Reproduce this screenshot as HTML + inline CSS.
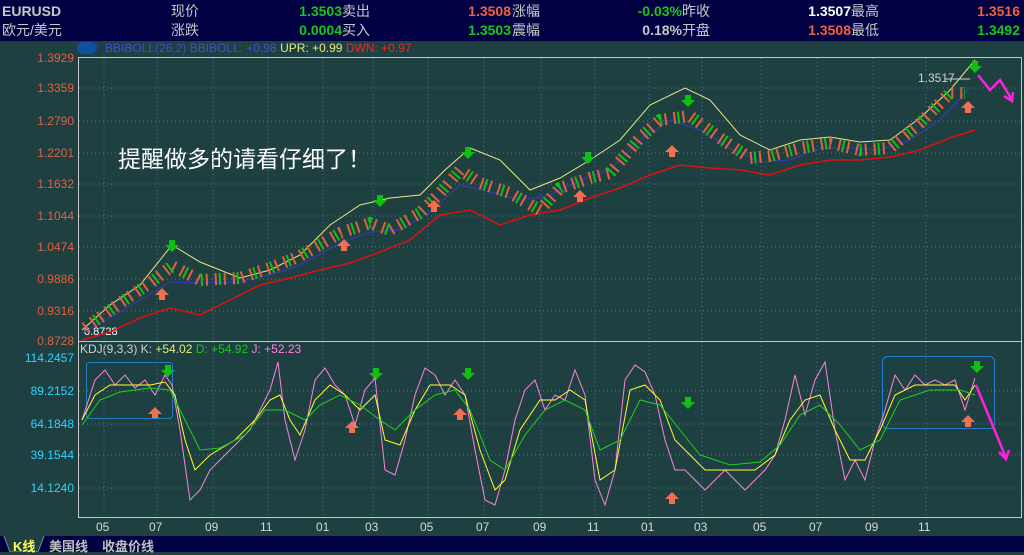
<!DOCTYPE html><html><head><meta charset="utf-8"><style>
*{margin:0;padding:0}body{width:1024px;height:552px;background:#1f4040;position:relative;overflow:hidden;font-family:"Liberation Sans","Noto Sans CJK SC",sans-serif}
.hd{position:absolute;left:0;top:0;width:1024px;height:41px;background:#000042;font-size:14px;color:#c8c8c8}
.hd span{position:absolute;line-height:19px}
.g{color:#18c818;font-weight:bold}.r{color:#f06040;font-weight:bold}.w{color:#fff;font-weight:bold}
.ft{position:absolute;left:0;top:536px;width:1024px;height:16px;background:#000042;font-size:13px;font-weight:bold;color:#c0c0c0}
.ax{position:absolute;font-size:12px;color:#e06040;text-align:right;width:74px;left:0}
.ax2{color:#30d0ff}
.mo{position:absolute;top:520px;font-size:12px;color:#d8d8d8}
</style></head><body>
<div class="hd">
<span style="left:2px;top:2px;font-weight:bold">EURUSD</span><span style="left:2px;top:21px">欧元/美元</span>
<span style="left:171px;top:2px">现价</span><span style="left:171px;top:21px">涨跌</span>
<span class="g" style="right:682px;top:2px">1.3503</span><span class="g" style="right:682px;top:21px">0.0004</span>
<span style="left:342px;top:2px">卖出</span><span style="left:342px;top:21px">买入</span>
<span class="r" style="right:513px;top:2px">1.3508</span><span class="g" style="right:513px;top:21px">1.3503</span>
<span style="left:512px;top:2px">涨幅</span><span style="left:512px;top:21px">震幅</span>
<span class="g" style="right:342px;top:2px">-0.03%</span><span style="right:342px;top:21px;font-weight:bold">0.18%</span>
<span style="left:682px;top:2px">昨收</span><span style="left:682px;top:21px">开盘</span>
<span class="w" style="right:173px;top:2px">1.3507</span><span class="r" style="right:173px;top:21px">1.3508</span>
<span style="left:851px;top:2px">最高</span><span style="left:851px;top:21px">最低</span>
<span class="r" style="right:4px;top:2px">1.3516</span><span class="g" style="right:4px;top:21px">1.3492</span>
</div>
<div style="position:absolute;left:77px;top:42px;width:20px;height:12px;background:#1050a0;border-radius:6px"></div>
<div style="position:absolute;left:105px;top:41px;font-size:12px;color:#4848d8">BBIBOLL(26,2) BBIBOLL: +0.98 <span style="color:#e8e880">UPR: +0.99</span> <span style="color:#ff2020">DWN: +0.97</span></div>
<div class="ax" style="top:51px">1.3929</div><div class="ax" style="top:81px">1.3359</div><div class="ax" style="top:114px">1.2790</div><div class="ax" style="top:146px">1.2201</div><div class="ax" style="top:177px">1.1632</div><div class="ax" style="top:209px">1.1044</div><div class="ax" style="top:240px">1.0474</div><div class="ax" style="top:272px">0.9886</div><div class="ax" style="top:304px">0.9316</div><div class="ax" style="top:334px">0.8728</div>
<div class="ax ax2" style="top:351px">114.2457</div><div class="ax ax2" style="top:384px">89.2152</div><div class="ax ax2" style="top:417px">64.1848</div><div class="ax ax2" style="top:448px">39.1544</div><div class="ax ax2" style="top:481px">14.1240</div>
<div style="position:absolute;left:80px;top:342px;font-size:12px;color:#d0d0d0">KDJ(9,3,3) K: <span style="color:#e8e880">+54.02</span> <span style="color:#18c818">D: +54.92</span> <span style="color:#ff80e0">J: +52.23</span></div>
<div style="position:absolute;left:84px;top:326px;font-size:11px;color:#fff">0.8728</div>
<div style="position:absolute;left:918px;top:71px;font-size:12px;color:#d0d0d0">1.3517</div>
<div style="position:absolute;left:118px;top:140px;font-size:23px;color:#fff">提醒做多的请看仔细了！</div>
<svg style="position:absolute;left:0;top:0" width="1024" height="552">
<g stroke="#5070a0" stroke-dasharray="1 3" stroke-width="1">
<path d="M79 88H1020M79 121H1020M79 153H1020M79 184H1020M79 216H1020M79 247H1020M79 279H1020M79 311H1020M79 391H1020M79 424H1020M79 455H1020M79 488H1020"/>
<path d="M104 58V516M157 58V516M213 58V516M268 58V516M323 58V516M373 58V516M428 58V516M484 58V516M541 58V516M595 58V516M649 58V516M702 58V516M761 58V516M817 58V516M873 58V516M926 58V516"/>
</g>
<rect x="78.5" y="57.5" width="943" height="460" fill="none" stroke="#c8c8c8"/>
<path d="M78 341.5H1022" stroke="#c8c8c8"/>
<polyline fill="none" stroke="#e8e880" points="82,330 110,305 140,285 172,245 200,262 240,278 270,270 300,255 330,225 360,205 390,198 420,195 445,170 470,148 500,160 530,190 560,178 590,160 620,140 650,105 685,88 710,100 740,135 770,150 800,140 830,137 860,142 890,140 920,118 950,90 975,60"/>
<polyline fill="none" stroke="#3838c8" points="82,333 110,318 140,300 170,282 200,283 240,282 270,275 300,265 340,243 370,232 400,230 430,212 460,185 490,192 520,200 550,195 580,180 610,170 640,140 670,120 700,130 730,148 760,162 790,160 820,148 850,148 880,150 910,140 940,120 970,88"/>
<polyline fill="none" stroke="#e01010" stroke-width="1.5" points="82,340 110,332 140,318 170,308 200,315 230,300 260,285 290,278 320,270 350,263 380,252 410,240 440,215 470,210 500,225 530,215 560,210 590,198 620,188 650,175 680,165 710,168 740,170 770,175 800,165 830,160 860,160 890,157 920,150 950,138 975,130"/>
<g fill="none" stroke-width="12">
<polyline stroke="#e06040" stroke-dasharray="2 7" points="85,328 120,303 150,283 172,266 200,280 240,278 270,268 300,256 340,233 370,223 390,230 420,213 440,193 460,170 480,183 510,193 540,210 560,188 590,178 610,173 640,138 660,120 690,116 720,138 750,158 770,156 800,148 830,143 860,150 890,148 920,123 950,93 965,93"/>
<polyline stroke="#10c010" stroke-dasharray="2 16" stroke-dashoffset="5" points="85,328 120,303 150,283 172,266 200,280 240,278 270,268 300,256 340,233 370,223 390,230 420,213 440,193 460,170 480,183 510,193 540,210 560,188 590,178 610,173 640,138 660,120 690,116 720,138 750,158 770,156 800,148 830,143 860,150 890,148 920,123 950,93 965,93"/>
</g>
<path d="M945 79H970" stroke="#d0d0d0"/>
<g fill="#10c010">
<path d="M169 240h6v5h4l-7 7-7-7h4z"/><path d="M377 195h6v5h4l-7 7-7-7h4z"/><path d="M465 147h6v5h4l-7 7-7-7h4z"/><path d="M585 152h6v5h4l-7 7-7-7h4z"/><path d="M685 95h6v5h4l-7 7-7-7h4z"/><path d="M972 61h6v5h4l-7 7-7-7h4z"/>
<path d="M165 365h6v5h4l-7 7-7-7h4z"/><path d="M373 368h6v5h4l-7 7-7-7h4z"/><path d="M465 368h6v5h4l-7 7-7-7h4z"/><path d="M685 397h6v5h4l-7 7-7-7h4z"/><path d="M974 361h6v5h4l-7 7-7-7h4z"/>
</g>
<g fill="#f07050">
<path d="M159 300h6v-5h4l-7-7-7 7h4z"/><path d="M341 251h6v-5h4l-7-7-7 7h4z"/><path d="M431 212h6v-5h4l-7-7-7 7h4z"/><path d="M577 202h6v-5h4l-7-7-7 7h4z"/><path d="M669 157h6v-5h4l-7-7-7 7h4z"/><path d="M965 113h6v-5h4l-7-7-7 7h4z"/>
<path d="M152 419h6v-5h4l-7-7-7 7h4z"/><path d="M349 433h6v-5h4l-7-7-7 7h4z"/><path d="M457 420h6v-5h4l-7-7-7 7h4z"/><path d="M669 504h6v-5h4l-7-7-7 7h4z"/><path d="M965 427h6v-5h4l-7-7-7 7h4z"/>
</g>
<rect x="86.5" y="362.5" width="86" height="56" rx="3" fill="none" stroke="#2080c0"/>
<rect x="882.5" y="356.5" width="112" height="72" rx="5" fill="none" stroke="#2080d0"/>
<polyline fill="none" stroke="#ff80e0" points="82,420 95,380 105,370 115,385 125,375 135,388 145,380 155,395 165,375 172,385 180,430 190,500 200,490 210,470 230,450 250,430 270,390 278,362 285,420 295,460 305,430 315,380 325,368 335,385 345,395 355,425 365,390 375,378 385,470 395,475 405,440 415,395 425,368 435,375 445,395 455,380 465,395 475,450 485,500 495,505 505,470 515,420 525,390 535,380 545,410 555,395 565,400 575,370 585,395 595,480 605,505 615,470 625,380 635,365 645,372 655,395 665,440 675,470 685,470 695,480 705,490 715,480 725,470 735,480 745,490 755,480 765,470 775,455 785,420 795,375 805,415 815,380 825,362 835,430 845,480 855,460 865,480 875,440 885,410 895,375 905,390 915,375 925,385 935,380 945,385 955,380 965,410 975,378"/>
<polyline fill="none" stroke="#ffff30" points="82,420 95,395 110,385 130,385 150,385 165,382 175,395 185,440 195,470 210,455 235,440 255,420 270,400 280,395 290,420 300,435 315,400 330,385 345,395 360,410 375,395 385,440 400,445 415,410 430,385 450,385 465,395 480,450 495,490 505,480 520,430 540,400 555,400 570,390 585,400 600,480 615,470 630,390 645,385 660,400 675,440 690,455 705,470 730,470 755,470 775,455 790,420 805,400 820,395 835,430 850,460 865,460 880,430 895,395 915,385 935,385 955,385 965,400 975,385"/>
<polyline fill="none" stroke="#20d020" points="82,425 100,400 120,392 150,388 170,390 185,420 200,450 220,448 245,435 265,410 285,410 305,420 320,405 340,395 360,405 380,420 395,430 415,410 435,395 455,390 470,410 490,460 505,470 525,435 545,410 565,400 585,410 600,450 620,440 640,400 660,405 680,430 700,455 730,465 760,462 780,445 800,415 820,405 840,425 860,450 880,440 900,400 930,390 960,390 975,395"/>
<g fill="none" stroke="#ff20e0" stroke-width="2.5">
<polyline points="978,75 990,90 1000,80 1012,100"/><path d="M1004 96l8 5 1-9"/>
<polyline points="976,385 1006,458"/><path d="M999 452l7 7 3-9"/>
</g>
</svg>
<div class="mo" style="left:96px">05</div><div class="mo" style="left:149px">07</div><div class="mo" style="left:205px">09</div><div class="mo" style="left:260px">11</div><div class="mo" style="left:316px">01</div><div class="mo" style="left:365px">03</div><div class="mo" style="left:420px">05</div><div class="mo" style="left:476px">07</div><div class="mo" style="left:533px">09</div><div class="mo" style="left:587px">11</div><div class="mo" style="left:641px">01</div><div class="mo" style="left:694px">03</div><div class="mo" style="left:753px">05</div><div class="mo" style="left:809px">07</div><div class="mo" style="left:865px">09</div><div class="mo" style="left:918px">11</div>
<div class="ft"><svg style="position:absolute;left:0;top:0" width="50" height="16"><path d="M4 0L10 16H38L44 0" fill="#1f4040" stroke="#809090"/></svg><span style="position:absolute;left:13px;top:0;color:#ffff60">K线</span><span style="position:absolute;left:49px;top:0">美国线</span><span style="position:absolute;left:102px;top:0">收盘价线</span></div>
</body></html>
